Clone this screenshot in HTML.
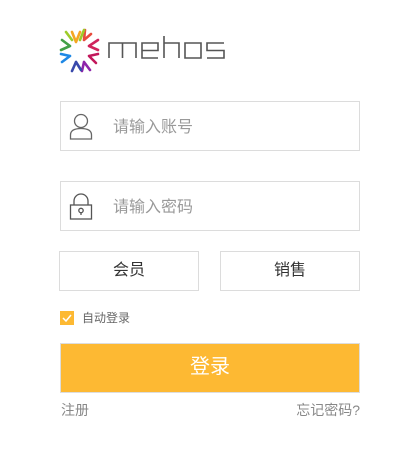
<!DOCTYPE html>
<html><head><meta charset="utf-8"><style>
*{margin:0;padding:0;box-sizing:border-box}
body{width:420px;height:460px;background:#fff;position:relative;font-family:"Liberation Sans","Noto Sans CJK SC",sans-serif;overflow:hidden}
.a{position:absolute}
.inp{border:1px solid #dcdcdc;left:60px;width:300px;height:50px}
.ph{position:absolute;left:52px;top:11px;font-size:16px;color:#999}
.btn{border:1px solid #dcdcdc;top:251px;height:40px;width:140px;text-align:center;line-height:37px;font-size:16px;color:#333}
</style></head><body>
<svg class="a" style="left:58px;top:26px" width="175" height="50" viewBox="0 0 175 50">
<g stroke-width="2.6" fill="none" stroke-linecap="round">
<path d="M18 16 L14 6 M18 16 L22 6" stroke="#f5a623"/>
<path d="M26 14 L27 4 M26 14 L33 8" stroke="#e74c3c"/>
<path d="M31 20 L40 14 M31 20 L40 24" stroke="#d0245c"/>
<path d="M31 30 L40 28 M31 30 L38 37" stroke="#c2185b"/>
<path d="M26 36 L32 44 M26 36 L24 45" stroke="#8e24aa"/>
<path d="M18 36 L14 45 M18 36 L23 44" stroke="#3949ab"/>
<path d="M12 30 L4 36 M12 30 L3 28" stroke="#1e88e5"/>
<path d="M12 20 L3 24 M12 20 L4 14" stroke="#43a047"/>
<path d="M14 14 L8 6 M22 14 L26 4" stroke="#9ccc2a"/>
</g>
<g stroke="#555" stroke-width="1.6" fill="none">
<path d="M51 32 V17 H78 V32 M64.5 17 V32"/>
<path d="M100 32 H84 V17 H100 V24.5 H84"/>
<path d="M106 10 V32 M106 17 H121 V32"/>
<path d="M127 17 H143 V32 H127 Z"/>
<path d="M166 17 H149 V24.5 H166 V32 H149"/>
</g>
</svg>
<div class="a inp" style="top:101px">
<svg class="a" style="left:8px;top:11px" width="24" height="28" viewBox="0 0 24 28" fill="none" stroke="#666" stroke-width="1.3"><circle cx="12" cy="8" r="6.5"/><path d="M1.5 26 V22 Q1.5 15.5 12 15.5 Q22.5 15.5 22.5 22 V26 Z"/></svg>
<span class="ph">请输入账号</span></div>
<div class="a inp" style="top:181px">
<svg class="a" style="left:8px;top:11px" width="24" height="28" viewBox="0 0 24 28" fill="none" stroke="#555" stroke-width="1.3"><path d="M5 12 V8 A7 7 0 0 1 19 8 V12"/><rect x="1.5" y="12" width="21" height="14"/><circle cx="12" cy="17.5" r="2.2"/><path d="M12 19.7 V22"/></svg>
<span class="ph">请输入密码</span></div>
<div class="a btn" style="left:59px">会员</div>
<div class="a btn" style="left:220px">销售</div>
<div class="a" style="left:60px;top:311px;width:14px;height:14px;background:#fdb933"><svg width="14" height="14"><path d="M3 7 L6 10 L11 4" stroke="#fff" stroke-width="1.5" fill="none"/></svg></div>
<div class="a" style="left:82px;top:309px;font-size:12px;color:#666">自动登录</div>
<div class="a" style="left:60px;top:343px;width:300px;height:50px;background:#fdb933;border:1px solid #ddd;color:#fff;font-size:20px;text-align:center;line-height:47px">登录</div>
<div class="a" style="left:61px;top:400px;font-size:14px;color:#888">注册</div>
<div class="a" style="right:60px;top:400px;font-size:14px;color:#888">忘记密码?</div>
</body></html>
